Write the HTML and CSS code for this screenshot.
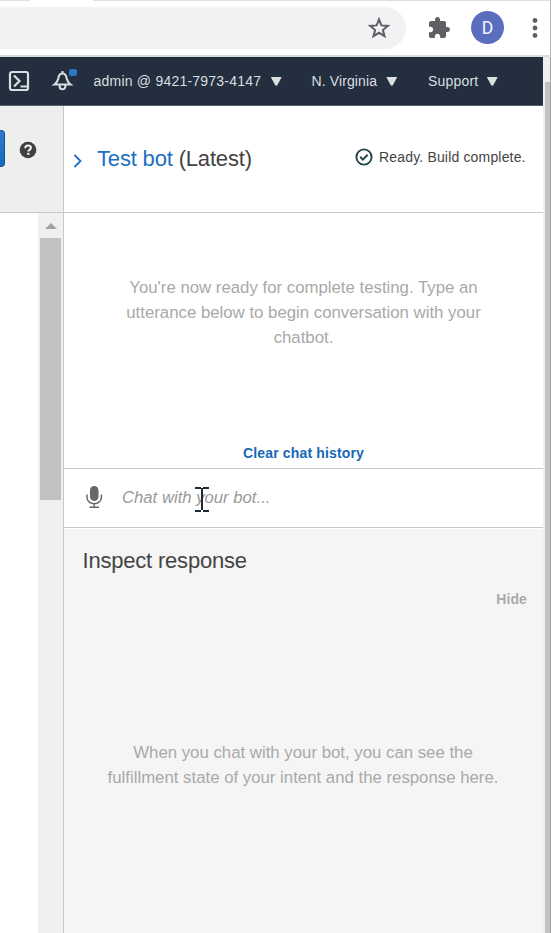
FILE: index.html
```html
<!DOCTYPE html>
<html lang="en">
<head>
<meta charset="utf-8">
<title>Test bot</title>
<link rel="stylesheet" href="styles.css">
</head>
<body>
<div class="window">
  <div class="browser-bar">
    <div class="address">
      <svg class="star" width="24" height="24" viewBox="0 0 24 24"><path d="M12 3.500l2.400 5.900 6.400.5-4.900 4.100 1.600 6.200-5.500-3.400-5.500 3.400 1.600-6.200-4.900-4.100 6.400-.5z" fill="none" stroke="#5f6063" stroke-width="2"/></svg>
    </div>
    <svg class="puzzle" width="24" height="24" viewBox="0 0 24 24"><path fill="#5f6063" d="M20.500 11H19V7c0-1.100-.9-2-2-2h-4V3.500C13 2.120 11.880 1 10.500 1S8 2.120 8 3.500V5H4c-1.100 0-1.990.9-1.990 2v3.800H3.500c1.490 0 2.700 1.210 2.700 2.700s-1.210 2.700-2.700 2.700H2V20c0 1.100.9 2 2 2h3.800v-1.500c0-1.490 1.210-2.700 2.700-2.700 1.490 0 2.700 1.210 2.700 2.700V22H17c1.100 0 2-.9 2-2v-4h1.500c1.380 0 2.500-1.120 2.500-2.500S21.880 11 20.500 11z"/></svg>
    <div class="avatar">D</div>
    <svg class="dots" width="6" height="22" viewBox="0 0 6 22"><g fill="#5f6063"><circle cx="3" cy="3.500" r="2.400"/><circle cx="3" cy="11" r="2.400"/><circle cx="3" cy="18.500" r="2.400"/></g></svg>
  </div>
  <div class="viewport">
    <div class="page">
      <header class="console-bar">
        <svg class="shell" width="22" height="22" viewBox="0 0 22 22"><g fill="none" stroke="#d9dee0" stroke-width="2.200"><rect x="2" y="2" width="18" height="18" rx="2"/><path d="M6 5.500l5.500 5.500L6 16.500M12.500 16.500h6.500"/></g></svg>
        <svg class="bell" width="26" height="24" viewBox="0 0 26 24"><path d="M3.500 16.500h16c-3-2.200-3.300-3.500-3.800-6C15.200 7 14 5.500 11.500 5.500S7.800 7 7.300 10.500c-.5 2.500-.8 3.800-3.800 6zM11.500 3v3M8.700 17v1.500a2.800 2.800 0 0 0 5.600 0V17" fill="none" stroke="#d9dee0" stroke-width="2.100"/><rect x="18" y="1" width="8" height="7" rx="2.500" fill="#2a79c7"/></svg>
        <span class="account">admin @ 9421-7973-4147</span><i class="caret"></i>
        <span class="region">N. Virginia</span><i class="caret"></i>
        <span class="support">Support</span><i class="caret"></i>
      </header>
      <div class="workspace">
        <aside class="side">
          <div class="side-head">
            <div class="button-end"></div>
            <svg class="help" width="18" height="18" viewBox="0 0 18 18"><circle cx="9" cy="9" r="8.300" fill="#404040"/><path d="M6.200 7.200C6.300 5.300 7.500 4.600 9 4.600c1.700 0 2.900.9 2.900 2.300 0 1.900-2.600 1.900-2.600 3.600" fill="none" stroke="#f1f1f1" stroke-width="2"/><rect x="8.200" y="11.800" width="2.200" height="2.100" fill="#f1f1f1"/></svg>
          </div>
          <div class="side-scroll">
            <div class="track">
              <svg width="12" height="6" viewBox="0 0 12 6"><path d="M0 6L6 0l6 6z" fill="#a3a19b"/></svg>
              <div class="thumb"></div>
            </div>
          </div>
        </aside>
        <main class="panel">
          <div class="panel-head">
            <svg class="chevron" width="10" height="14" viewBox="0 0 10 14"><path d="M1.500 1l6 6-6 6" fill="none" stroke="#206fc3" stroke-width="1.800"/></svg>
            <h1><a>Test bot</a> (Latest)</h1>
            <svg class="check" width="18" height="18" viewBox="0 0 18 18"><circle cx="9" cy="9" r="7.600" fill="none" stroke="#204447" stroke-width="1.900"/><path d="M5.200 8.800l2.700 2.800 4.700-4.800" fill="none" stroke="#204447" stroke-width="2"/></svg>
            <span class="status">Ready. Build complete.</span>
          </div>
          <section class="chat">
            <p class="hint">You're now ready for complete testing. Type an<br>utterance below to begin conversation with your<br>chatbot.</p>
            <a class="clear">Clear chat history</a>
          </section>
          <div class="entry">
            <svg class="mic" width="18" height="24" viewBox="0 0 18 24"><rect x="5" y="1" width="8.500" height="15" rx="4.200" fill="#6b6769"/><path d="M2 9.500v3a7.200 6.200 0 0 0 14.400 0v-3M9.200 18.500V22M4.500 22.200h9.500" fill="none" stroke="#6b6769" stroke-width="1.500"/></svg>
            <span class="placeholder">Chat with your bot...</span>
            <svg class="cursor" width="14" height="26" viewBox="0 0 14 26"><path d="M0 2h6M8 2h6M7 2v22M0 25h6M8 25h6" fill="none" stroke="#202936" stroke-width="2"/></svg>
          </div>
          <section class="inspect">
            <h2>Inspect response</h2>
            <a class="hide">Hide</a>
            <p class="hint">When you chat with your bot, you can see the<br>fulfillment state of your intent and the response here.</p>
          </section>
        </main>
      </div>
    </div>
    <div class="page-track"><div class="page-thumb"></div></div>
  </div>
</div>
</body>
</html>
```
FILE: styles.css
```css
* { box-sizing: border-box; }
body { margin: 0; font-family: "Liberation Sans", Arial, sans-serif; background: #fff; }
svg { display: block; flex: none; }
h1, h2, p { margin: 0; font-weight: 400; }
.window { width: 551px; height: 933px; display: flex; flex-direction: column; overflow: hidden; }
.browser-bar {
  height: 57px; flex: none; display: flex; align-items: center;
  border-bottom: 2px solid #d9dadc; border-right: 1px solid #b5b5b5;
  background: linear-gradient(#dee0e3, #dee0e3) 0 0 / 30px 1px no-repeat,
    linear-gradient(#dee0e3, #dee0e3) 93px 0 / 458px 1px no-repeat, #fff;
}
.address { width: 406px; height: 42px; border-radius: 0 21px 21px 0; background: #f1f2f4; display: flex; justify-content: flex-end; align-items: center; padding-right: 15px; }
.puzzle { margin-left: 21px; }
.avatar { width: 33px; height: 33px; margin-left: 20px; border-radius: 50%; background: #5b6dbf; color: #f3f5fc; font: 17.5px/35px Roboto, sans-serif; text-align: center; }
.dots { margin-left: 28px; }
.viewport { flex: 1; min-height: 0; display: flex; }
.page { width: 543px; display: flex; flex-direction: column; }
.page-track { width: 8px; background: #f0f0f0; border-right: 1px solid #a2a2a2; padding: 25px 0 0 2px; }
.page-thumb { height: 100%; background: #c1c1c1; }
.console-bar { height: 49px; flex: none; background: #232f3e; border-bottom: 1px solid #58606b; display: flex; align-items: center; color: #d9dee0; font-size: 14px; line-height: 20px; white-space: nowrap; }
.shell { margin-left: 8px; }
.bell { margin: 0 0 2px 21px; }
.account { width: 177px; margin-left: 16.500px; letter-spacing: .22px; }
.region { width: 74.500px; margin-left: 29.500px; letter-spacing: .12px; }
.support { width: 58.500px; margin-left: 30.500px; letter-spacing: .2px; }
.caret { width: 11.500px; height: 9px; background: #dde0e0; clip-path: polygon(0 0, 100% 0, 58% 100%, 42% 100%); }
.workspace { flex: 1; min-height: 0; display: flex; }
.side { width: 64px; border-right: 1px solid #c8c8c8; display: flex; flex-direction: column; }
.side-head { height: 107px; flex: none; background: #eee; border-bottom: 1px solid #c8c8c8; display: flex; align-items: flex-start; }
.button-end { width: 5px; height: 37px; margin-top: 24px; border: 1px solid #17518b; border-left: 0; border-radius: 0 4px 4px 0; background: linear-gradient(#2c7bcc, #1669ba); }
.help { margin: 35px 0 0 14px; }
.side-scroll { flex: 1; display: flex; justify-content: flex-end; }
.track { width: 25px; background: #f0f0f0; padding: 10px 2px 0; }
.track svg { margin-left: 5px; }
.thumb { height: 262px; margin-top: 9px; background: #c1c1c1; }
.panel { width: 479px; display: flex; flex-direction: column; }
.panel-head { height: 107px; flex: none; border-bottom: 1px solid #c8c8c8; display: flex; align-items: center; white-space: nowrap; }
.chevron { margin: 4px 0 0 9px; }
h1 { width: 170px; margin-left: 14px; font-size: 22px; line-height: 26px; color: #444; letter-spacing: -.17px; }
h1 a { color: #206fc3; }
.check { margin: 0 0 4px 88px; }
.status { margin: 0 0 4px 6px; font-size: 14px; color: #444; letter-spacing: .17px; }
.chat { height: 256px; flex: none; border-bottom: 1px solid #c8c8c8; display: flex; flex-direction: column; align-items: center; }
.hint { text-align: center; color: #a9a9a9; font-size: 16.800px; line-height: 25px; white-space: nowrap; }
.chat .hint { margin-top: 62px; }
.clear { margin-top: 94px; font-size: 14px; line-height: 18px; font-weight: 700; color: #1768b7; letter-spacing: .15px; }
.entry { position: relative; height: 59px; flex: none; border-bottom: 1px solid #c8c8c8; display: flex; align-items: center; }
.mic { margin: 0 0 2px 21px; }
.placeholder { margin: 0 0 0 19px; line-height: 20px; font-size: 16.700px; font-style: italic; color: #999; }
.cursor { position: absolute; left: 131px; top: 17px; }
.inspect { flex: 1; margin-top: 1px; background: #f5f5f5; display: flex; flex-direction: column; }
h2 { margin: 19px 0 0 18.500px; font-size: 22px; line-height: 26px; color: #444; letter-spacing: -.2px; }
.hide { align-self: flex-end; margin: 15px 16px 0 0; font-size: 14px; line-height: 20px; font-weight: 700; color: #aaa; letter-spacing: .1px; }
.inspect .hint { margin: 131px 1px 0 0; }
```
